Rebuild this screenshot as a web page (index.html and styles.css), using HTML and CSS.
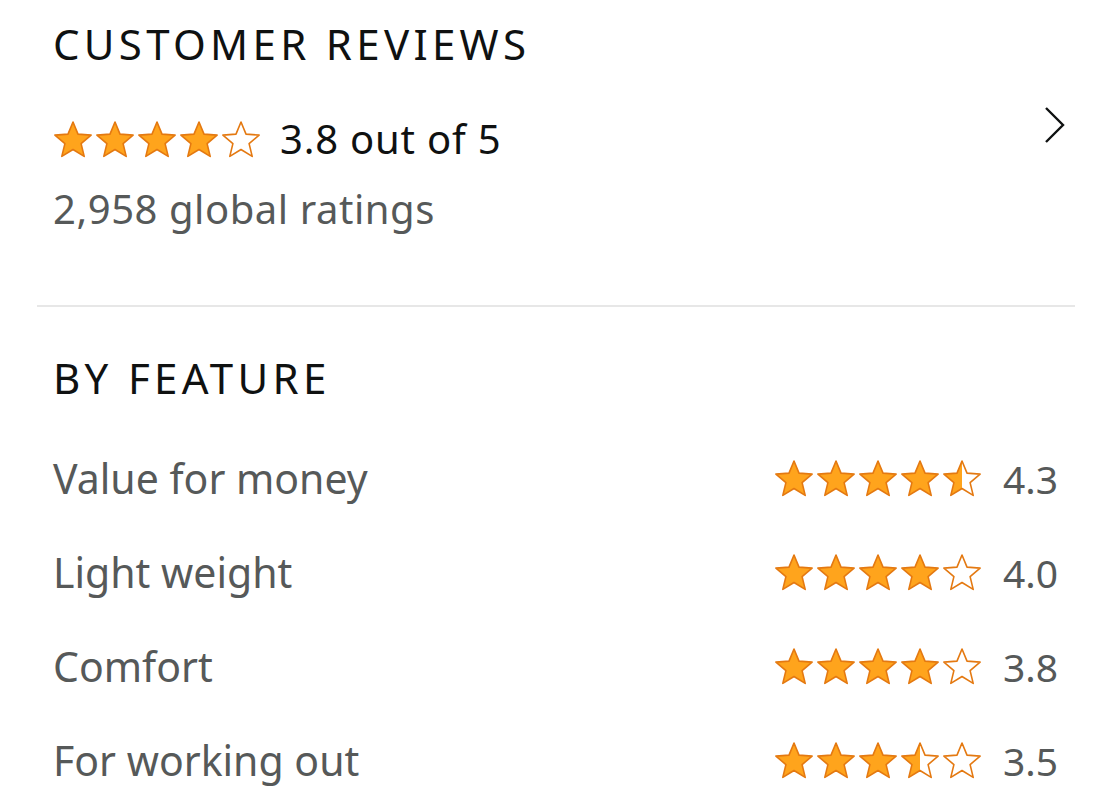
FILE: index.html
```html
<!DOCTYPE html>
<html lang="en">
<head>
  <meta charset="UTF-8" />
  <meta name="viewport" content="width=device-width, initial-scale=1.0" />
  <title>Customer reviews</title>
  <link rel="stylesheet" href="styles.css">
</head>
<body>
  <svg class="defs" width="0" height="0" aria-hidden="true">
    <defs>
      <linearGradient id="half">
        <stop offset="0.5" stop-color="#ffa41c" />
        <stop offset="0.5" stop-color="#ffffff" />
      </linearGradient>
      <symbol id="star" viewBox="0 0 40 37">
        <polygon points="20,1 25,13.1 38.1,14.1 28.1,22.6 31.2,35.4 20,28.5 8.8,35.4 11.9,22.6 1.9,14.1 15,13.1" />
      </symbol>
    </defs>
  </svg>

  <div class="page">
    <section class="summary">
      <div class="summary-main">
        <h1>CUSTOMER REVIEWS</h1>
        <div class="overall">
          <div class="stars big">
            <svg class="star full"><use href="#star" /></svg>
            <svg class="star full"><use href="#star" /></svg>
            <svg class="star full"><use href="#star" /></svg>
            <svg class="star full"><use href="#star" /></svg>
            <svg class="star empty"><use href="#star" /></svg>
          </div>
          <span class="overall-text">3.8 out of 5</span>
        </div>
        <p class="count">2,958 global ratings</p>
      </div>
      <svg class="chevron" width="24" height="40" viewBox="0 0 24 40">
        <polyline points="4,3 21,20 4,37" />
      </svg>
    </section>

    <section class="features">
      <h2>BY FEATURE</h2>

      <div class="feature">
        <span class="label">Value for money</span>
        <div class="score">
          <div class="stars">
            <svg class="star full"><use href="#star" /></svg>
            <svg class="star full"><use href="#star" /></svg>
            <svg class="star full"><use href="#star" /></svg>
            <svg class="star full"><use href="#star" /></svg>
            <svg class="star half"><use href="#star" /></svg>
          </div>
          <span class="num">4.3</span>
        </div>
      </div>

      <div class="feature">
        <span class="label">Light weight</span>
        <div class="score">
          <div class="stars">
            <svg class="star full"><use href="#star" /></svg>
            <svg class="star full"><use href="#star" /></svg>
            <svg class="star full"><use href="#star" /></svg>
            <svg class="star full"><use href="#star" /></svg>
            <svg class="star empty"><use href="#star" /></svg>
          </div>
          <span class="num">4.0</span>
        </div>
      </div>

      <div class="feature">
        <span class="label">Comfort</span>
        <div class="score">
          <div class="stars">
            <svg class="star full"><use href="#star" /></svg>
            <svg class="star full"><use href="#star" /></svg>
            <svg class="star full"><use href="#star" /></svg>
            <svg class="star full"><use href="#star" /></svg>
            <svg class="star empty"><use href="#star" /></svg>
          </div>
          <span class="num">3.8</span>
        </div>
      </div>

      <div class="feature">
        <span class="label">For working out</span>
        <div class="score">
          <div class="stars">
            <svg class="star full"><use href="#star" /></svg>
            <svg class="star full"><use href="#star" /></svg>
            <svg class="star full"><use href="#star" /></svg>
            <svg class="star half"><use href="#star" /></svg>
            <svg class="star empty"><use href="#star" /></svg>
          </div>
          <span class="num">3.5</span>
        </div>
      </div>
    </section>
  </div>
</body>
</html>
```

FILE: styles.css
```css
body {
  margin: 0;
  background: #ffffff;
  font-family: "Noto Sans", "Open Sans", sans-serif;
  color: #0f1111;
}
.defs {
  position: absolute;
}
.page {
  padding: 0 35px 0 37px;
}

/* summary */
.summary {
  display: flex;
  justify-content: space-between;
  padding: 19px 9px 72px 16px;
  border-bottom: 2px solid #e7e7e7;
}
h1, h2 {
  margin: 0;
  font-size: 42px;
  font-weight: 400;
  line-height: 50px;
  letter-spacing: 4.3px;
}
.overall {
  display: flex;
  align-items: center;
  margin-top: 46px;
}
.overall-text {
  margin-left: 19px;
  font-size: 40px;
  line-height: 48px;
  letter-spacing: 0.8px;
}
.count {
  margin: 22px 0 0;
  font-size: 40px;
  line-height: 48px;
  letter-spacing: 0.55px;
  color: #565959;
}
.chevron {
  margin-top: 86px;
  fill: none;
  stroke: #0f1111;
  stroke-width: 2.4;
}

/* stars */
.stars {
  display: flex;
  gap: 2px;
}
.star {
  width: 40px;
  height: 37px;
  stroke: #e47911;
  stroke-width: 1.6;
  stroke-linejoin: round;
}
.star.full {
  fill: #ffa41c;
}
.star.empty {
  fill: #ffffff;
}
.star.half {
  fill: url(#half);
}

/* features */
.features {
  padding: 46px 17px 0 16px;
}
.feature {
  display: flex;
  justify-content: space-between;
  align-items: center;
  height: 94px;
  color: #565959;
}
.features h2 {
  margin-bottom: 28px;
}
.label {
  font-size: 41px;
}
.score {
  display: flex;
  align-items: center;
  gap: 21px;
}
.num {
  font-size: 39px;
}
```
